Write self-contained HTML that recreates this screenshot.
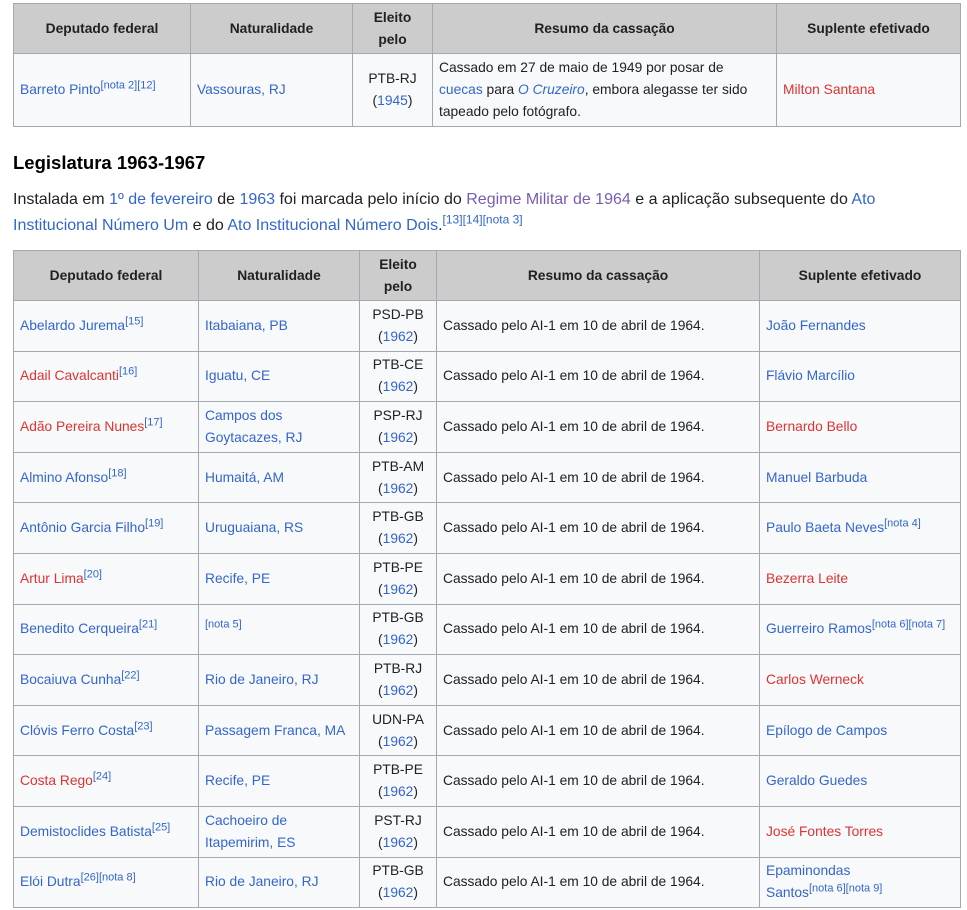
<!DOCTYPE html>
<html><head><meta charset="utf-8"><style>
body{margin:0;background:#fff;font-family:"Liberation Sans",Arial,sans-serif;color:#202122;width:967px;height:910px;overflow:hidden;position:relative}
table{position:absolute;left:13px;border-collapse:collapse;table-layout:fixed;font-size:13.8px;line-height:22px;background:#f8f9fa}
th,td{border:1px solid #a2a9b1;padding:0 6px;vertical-align:middle}
th{background:#cccccc;font-weight:bold;text-align:center}
td.c{text-align:center}
a{color:#3366cc;text-decoration:none}
a.r{color:#dd3333}
a.v{color:#795cb2}
sup{font-size:11px;line-height:0;vertical-align:super}
h2{position:absolute;left:13px;top:152px;margin:0;font-size:18.5px;font-weight:bold;color:#000}
p{position:absolute;left:13px;top:187px;margin:0;font-size:16px;line-height:26px;width:945px}
p sup{font-size:12px}
#t2 tr{height:50.6px}
</style></head><body>
<table style="top:3px;width:947px">
<colgroup><col style="width:177px"><col style="width:162px"><col style="width:80px"><col style="width:344px"><col style="width:184px"></colgroup>
<tr style="height:50px"><th>Deputado federal</th><th>Naturalidade</th><th>Eleito<br>pelo</th><th>Resumo da cassação</th><th>Suplente efetivado</th></tr>
<tr style="height:73px"><td><a>Barreto Pinto</a><sup><a>[nota 2]</a><a>[12]</a></sup></td><td><a>Vassouras, RJ</a></td><td class="c">PTB-RJ<br>(<a>1945</a>)</td><td>Cassado em 27 de maio de 1949 por posar de <a>cuecas</a> para <i><a>O Cruzeiro</a></i>, embora alegasse ter sido tapeado pelo fotógrafo.</td><td><a class="r">Milton Santana</a></td></tr>
</table>
<h2>Legislatura 1963-1967</h2>
<p>Instalada em <a>1º de fevereiro</a> de <a>1963</a> foi marcada pelo início do <a class="v">Regime Militar de 1964</a> e a aplicação subsequente do <a>Ato Institucional Número Um</a> e do <a>Ato Institucional Número Dois</a>.<sup><a>[13]</a><a>[14]</a><a>[nota 3]</a></sup></p>
<table id="t2" style="top:250px;width:947px">
<colgroup><col style="width:185px"><col style="width:161px"><col style="width:77px"><col style="width:323px"><col style="width:201px"></colgroup>
<tr style="height:50px"><th>Deputado federal</th><th>Naturalidade</th><th>Eleito<br>pelo</th><th>Resumo da cassação</th><th>Suplente efetivado</th></tr>
<tr><td><a>Abelardo Jurema</a><sup><a>[15]</a></sup></td><td><a>Itabaiana, PB</a></td><td class="c">PSD-PB<br>(<a>1962</a>)</td><td>Cassado pelo AI-1 em 10 de abril de 1964.</td><td><a>João Fernandes</a></td></tr>
<tr><td><a class="r">Adail Cavalcanti</a><sup><a>[16]</a></sup></td><td><a>Iguatu, CE</a></td><td class="c">PTB-CE<br>(<a>1962</a>)</td><td>Cassado pelo AI-1 em 10 de abril de 1964.</td><td><a>Flávio Marcílio</a></td></tr>
<tr><td><a class="r">Adão Pereira Nunes</a><sup><a>[17]</a></sup></td><td><a>Campos dos Goytacazes, RJ</a></td><td class="c">PSP-RJ<br>(<a>1962</a>)</td><td>Cassado pelo AI-1 em 10 de abril de 1964.</td><td><a class="r">Bernardo Bello</a></td></tr>
<tr><td><a>Almino Afonso</a><sup><a>[18]</a></sup></td><td><a>Humaitá, AM</a></td><td class="c">PTB-AM<br>(<a>1962</a>)</td><td>Cassado pelo AI-1 em 10 de abril de 1964.</td><td><a>Manuel Barbuda</a></td></tr>
<tr><td><a>Antônio Garcia Filho</a><sup><a>[19]</a></sup></td><td><a>Uruguaiana, RS</a></td><td class="c">PTB-GB<br>(<a>1962</a>)</td><td>Cassado pelo AI-1 em 10 de abril de 1964.</td><td><a>Paulo Baeta Neves</a><sup><a>[nota 4]</a></sup></td></tr>
<tr><td><a class="r">Artur Lima</a><sup><a>[20]</a></sup></td><td><a>Recife, PE</a></td><td class="c">PTB-PE<br>(<a>1962</a>)</td><td>Cassado pelo AI-1 em 10 de abril de 1964.</td><td><a class="r">Bezerra Leite</a></td></tr>
<tr><td><a>Benedito Cerqueira</a><sup><a>[21]</a></sup></td><td><sup><a>[nota 5]</a></sup></td><td class="c">PTB-GB<br>(<a>1962</a>)</td><td>Cassado pelo AI-1 em 10 de abril de 1964.</td><td><a>Guerreiro Ramos</a><sup><a>[nota 6]</a><a>[nota 7]</a></sup></td></tr>
<tr><td><a>Bocaiuva Cunha</a><sup><a>[22]</a></sup></td><td><a>Rio de Janeiro, RJ</a></td><td class="c">PTB-RJ<br>(<a>1962</a>)</td><td>Cassado pelo AI-1 em 10 de abril de 1964.</td><td><a class="r">Carlos Werneck</a></td></tr>
<tr><td><a>Clóvis Ferro Costa</a><sup><a>[23]</a></sup></td><td><a>Passagem Franca, MA</a></td><td class="c">UDN-PA<br>(<a>1962</a>)</td><td>Cassado pelo AI-1 em 10 de abril de 1964.</td><td><a>Epílogo de Campos</a></td></tr>
<tr><td><a class="r">Costa Rego</a><sup><a>[24]</a></sup></td><td><a>Recife, PE</a></td><td class="c">PTB-PE<br>(<a>1962</a>)</td><td>Cassado pelo AI-1 em 10 de abril de 1964.</td><td><a>Geraldo Guedes</a></td></tr>
<tr><td><a>Demistoclides Batista</a><sup><a>[25]</a></sup></td><td><a>Cachoeiro de Itapemirim, ES</a></td><td class="c">PST-RJ<br>(<a>1962</a>)</td><td>Cassado pelo AI-1 em 10 de abril de 1964.</td><td><a class="r">José Fontes Torres</a></td></tr>
<tr><td><a>Elói Dutra</a><sup><a>[26]</a><a>[nota 8]</a></sup></td><td><a>Rio de Janeiro, RJ</a></td><td class="c">PTB-GB<br>(<a>1962</a>)</td><td>Cassado pelo AI-1 em 10 de abril de 1964.</td><td><a>Epaminondas</a><br><a>Santos</a><sup><a>[nota 6]</a><a>[nota 9]</a></sup></td></tr>
</table>
</body></html>
